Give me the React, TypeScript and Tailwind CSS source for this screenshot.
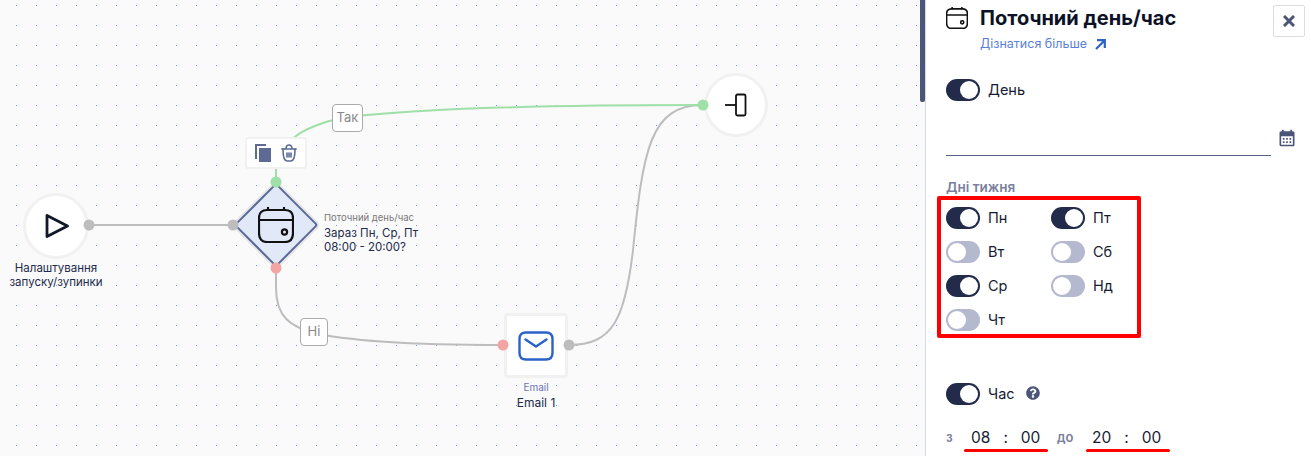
import React from "react";
import { MdCalendarMonth } from "react-icons/md";
import { FaQuestionCircle } from "react-icons/fa";

const CalIcon = ({ size, stroke = 2 }: { size: number; stroke?: number }) => (
  <svg width={size} height={size} viewBox="0 0 36 36" fill="none" stroke="#111" strokeWidth={stroke} strokeLinecap="round" strokeLinejoin="round">
    <path d="M9 3H27C32 3 35 6 35 11V26C35 32 32 35 27 35H9C4 35 1 32 1 26V11C1 6 4 3 9 3Z" />
    <path d="M1 13H35" />
    <path d="M10 0.8V3M26 0.8V3" />
    <circle cx="26.5" cy="25" r="2.6" />
  </svg>
);

const Toggle = ({ on }: { on: boolean }) =>
  on ? (
    <span className="flex h-[22px] w-[34px] shrink-0 items-center justify-end rounded-full bg-[#222b4a] pr-[2px]">
      <span className="h-[18px] w-[18px] rounded-full bg-white" />
    </span>
  ) : (
    <span className="flex h-[22px] w-[34px] shrink-0 items-center justify-start rounded-full bg-[#b4b9cf] pl-[2px]">
      <span className="h-[18px] w-[18px] rounded-full bg-white" />
    </span>
  );

const Day = ({ on, label }: { on: boolean; label: string }) => (
  <div className="flex h-[22px] items-center gap-2">
    <Toggle on={on} />
    <span className="text-[14.5px] text-[#161c33]">{label}</span>
  </div>
);

const Port = ({ x, y, color }: { x: number; y: number; color: string }) => (
  <div className={`absolute h-[11px] w-[11px] -translate-x-1/2 -translate-y-1/2 rounded-full ${color}`} style={{ left: x, top: y }} />
);

function Canvas() {
  return (
    <div className="relative h-full w-[920px] shrink-0 overflow-hidden bg-[#fafafa]">
      <svg className="absolute left-0 top-0" width="920" height="456" fill="none">
        <defs>
          <pattern id="dots" x="16" y="5" width="20" height="20" patternUnits="userSpaceOnUse">
            <rect width="1" height="1" fill="#6f9bec" />
          </pattern>
        </defs>
        <rect width="918" height="456" fill="url(#dots)" />
        <path d="M89 225H233" stroke="#bdbdbd" strokeWidth="2" />
        <path d="M276 268V288C276 318 292 326 310 332C350 342 420 345 503 345" stroke="#bdbdbd" strokeWidth="2" />
        <path d="M569 345C612 345 625 320 633 250C643 150 650 105 703 105" stroke="#bdbdbd" strokeWidth="2" />
        <path d="M276 182V170C282 135 310 126 340 118C420 108 540 105 703 105" stroke="#9fdfa8" strokeWidth="2" />
      </svg>

      {/* start node */}
      <div className="absolute left-[23px] top-[193px] flex h-[66px] w-[66px] items-center justify-center rounded-full border-[3px] border-[#f1f1f1] bg-white">
        <svg width="26" height="26" viewBox="0 0 26 26" fill="none" stroke="#111827" strokeWidth="2.8" strokeLinejoin="round" className="ml-[2px]">
          <path d="M3 2.5L23.5 13L3 23.5Z" />
        </svg>
      </div>
      <div className="absolute left-0 top-[261px] w-[112px] text-center text-[11.5px] leading-[14px] text-[#222b4a]">
        Налаштування<br />запуску/зупинки
      </div>

      {/* condition node */}
      <div className="absolute left-[246px] top-[195px] h-[60px] w-[60px] rotate-45 rounded-[3px] border-2 border-[#5a6a96] bg-[#e1e8f7] shadow-[0_0_0_2px_#e8e8e8]" />
      <div className="absolute left-[258px] top-[207px]">
        <CalIcon size={36} stroke={2.2} />
      </div>
      <div className="absolute left-[324px] top-[211px] text-[#222b4a]">
        <div className="text-[9.5px] leading-[13px] text-[#777]">Поточний день/час</div>
        <div className="mt-[2px] text-[11.5px] leading-[14px]">Зараз Пн, Ср, Пт<br />08:00 - 20:00?</div>
      </div>

      {/* toolbar */}
      <div className="absolute left-[245px] top-[137px] flex h-[32px] w-[62px] items-center gap-[10px] rounded-[3px] border-2 border-[#f1f1f1] bg-white pl-[8px]">
        <svg width="16" height="18" viewBox="0 0 16 18" fill="#5c6a94">
          <path d="M0 0H11V2H2V15H0Z" />
          <path d="M4 4H16V18H4Z" />
        </svg>
        <svg width="16" height="18" viewBox="0 0 16 18" fill="none" stroke="#5c6a94" strokeWidth="1.6" strokeLinecap="round" strokeLinejoin="round">
          <path d="M0.8 5H15.2M5 5C5 2.5 6 1 8 1C10 1 11 2.5 11 5" />
          <path d="M2 5C2 11 3 17 6 17H10C13 17 14 11 14 5" />
          <path d="M6 9V13M8 9V13M10 9V13" />
        </svg>
      </div>

      {/* edge labels */}
      <div className="absolute left-[332px] top-[104px] flex h-[28px] w-[31px] items-center justify-center rounded-[4px] border-[1.5px] border-[#aaaaaa] bg-white text-[13px] text-[#888]">Так</div>
      <div className="absolute left-[300px] top-[318px] flex h-[28px] w-[28px] items-center justify-center rounded-[4px] border-[1.5px] border-[#aaaaaa] bg-white text-[13px] text-[#888]">Ні</div>

      {/* end node */}
      <div className="absolute left-[704px] top-[73px] flex h-[64px] w-[64px] items-center justify-center rounded-full border-[3px] border-[#f1f1f1] bg-white">
        <svg width="24" height="24" viewBox="0 0 24 24" fill="none" stroke="#111" strokeWidth="1.8" strokeLinejoin="round">
          <path d="M1 12H12" />
          <rect x="12" y="1.5" width="9.5" height="21" rx="1.5" />
        </svg>
      </div>

      {/* email node */}
      <div className="absolute left-[504px] top-[313px] flex h-[65px] w-[64px] items-center justify-center rounded-[4px] border-[3px] border-[#f1f1f1] bg-white">
        <svg width="36" height="30" viewBox="0 0 36 30" fill="none" stroke="#2c62c8" strokeWidth="2.4" strokeLinecap="round" strokeLinejoin="round">
          <path d="M8 1.5H28C32.5 1.5 34.5 4 34.5 8V22C34.5 26 32.5 28.5 28 28.5H8C3.5 28.5 1.5 26 1.5 22V8C1.5 4 3.5 1.5 8 1.5Z" />
          <path d="M7.5 8.5L18 15.5L28.5 8.5" />
        </svg>
      </div>
      <div className="absolute left-[496px] top-[380px] w-[80px] text-center text-[10px] leading-[14px] text-[#6b75b5]">Email</div>
      <div className="absolute left-[496px] top-[395px] w-[80px] text-center text-[12px] leading-[16px] text-[#222b4a]">Email 1</div>

      <Port x={89} y={225} color="bg-[#bdbdbd]" />
      <Port x={233} y={225} color="bg-[#bdbdbd]" />
      <Port x={276} y={182} color="bg-[#9fdfa8]" />
      <Port x={276} y={268} color="bg-[#f3a5a5]" />
      <Port x={703} y={105} color="bg-[#9fdfa8]" />
      <Port x={503} y={345} color="bg-[#f3a5a5]" />
      <Port x={569} y={345} color="bg-[#bdbdbd]" />
    </div>
  );
}

function Panel() {
  return (
    <div className="relative h-full min-w-0 flex-1 overflow-hidden border-l border-[#d5d7e3] bg-white pl-[20px] text-[#161c33]">
      <div className="flex items-center gap-[12px] pt-[6px]">
        <CalIcon size={22} stroke={2.6} />
        <h1 className="text-[20px] font-bold leading-[24px] text-[#0d1226]">Поточний день/час</h1>
      </div>
      <div className="mt-[6px] flex items-center gap-[8px] pl-[34px] text-[12.5px] leading-[16px] text-[#5a7fd8]">
        <span>Дізнатися більше</span>
        <svg width="11" height="11" viewBox="0 0 11 11" fill="none" stroke="#2c62c8" strokeWidth="2.2">
          <path d="M2 1.2H9.8V9M9.8 1.2L1 10" />
        </svg>
      </div>
      <div className="mt-[27px] flex h-[22px] items-center gap-2">
        <Toggle on />
        <span className="text-[14.5px]">День</span>
      </div>
      <div className="mt-[26px] flex items-start">
        <div className="h-[29px] w-[325px] border-b border-[#5a6288]" />
        <MdCalendarMonth className="ml-[6px] mt-[1px] text-[20px] text-[#4b5578]" />
      </div>
      <div className="mt-[23px] text-[13.5px] font-semibold leading-[16px] text-[#7a7f9e]">Дні тижня</div>
      <div className="-ml-[9px] mt-[1px] grid h-[142px] w-[204px] grid-cols-[105px_1fr] content-start gap-y-[12px] rounded-[2px] border-[4px] border-[#ff0000] pl-[5px] pt-[7px]">
        <Day on label="Пн" />
        <Day on label="Пт" />
        <Day on={false} label="Вт" />
        <Day on={false} label="Сб" />
        <Day on label="Ср" />
        <Day on={false} label="Нд" />
        <Day on={false} label="Чт" />
      </div>
      <div className="mt-[45px] flex h-[22px] items-center">
        <Toggle on />
        <span className="ml-2 text-[14.5px]">Час</span>
        <FaQuestionCircle className="ml-[11px] mb-[3px] text-[14px] text-[#4b5578]" />
      </div>
      <div className="mt-[21px] flex h-[24px] items-center text-[15.5px]">
        <span className="w-[18px] text-[13px] font-semibold text-[#7a7f9e]">з</span>
        <div className="relative flex h-[24px] w-[84px] items-center justify-start gap-[13px] pl-[7px]">
          <span>08</span><span>:</span><span>00</span>
          <span className="absolute bottom-[-2px] left-0 right-0 h-[3px] rounded-full bg-[#ff0000]" />
        </div>
        <span className="ml-[9px] w-[29px] text-[13px] font-semibold text-[#7a7f9e]">до</span>
        <div className="relative flex h-[24px] w-[84px] items-center justify-start gap-[13px] pl-[6px]">
          <span>20</span><span>:</span><span>00</span>
          <span className="absolute bottom-[-2px] left-0 right-0 h-[3px] rounded-full bg-[#ff0000]" />
        </div>
      </div>
      <button className="absolute left-[347px] top-[5px] flex h-[32px] w-[32px] items-center justify-center rounded-[2px] border border-[#dddddd] bg-white">
        <svg width="12" height="12" viewBox="0 0 12 12" fill="none" stroke="#4b5578" strokeWidth="3">
          <path d="M1 1L11 11M11 1L1 11" />
        </svg>
      </button>
    </div>
  );
}

export default function App() {
  return (
    <div className="flex h-[456px] w-[1311px] overflow-hidden font-['Inter',sans-serif]">
      <Canvas />
      <div className="relative h-full w-[5px] shrink-0 bg-[#fafafa]">
        <div className="h-[102px] w-[5px] rounded-b-[2px] bg-[#4b5578]" />
      </div>
      <Panel />
    </div>
  );
}
